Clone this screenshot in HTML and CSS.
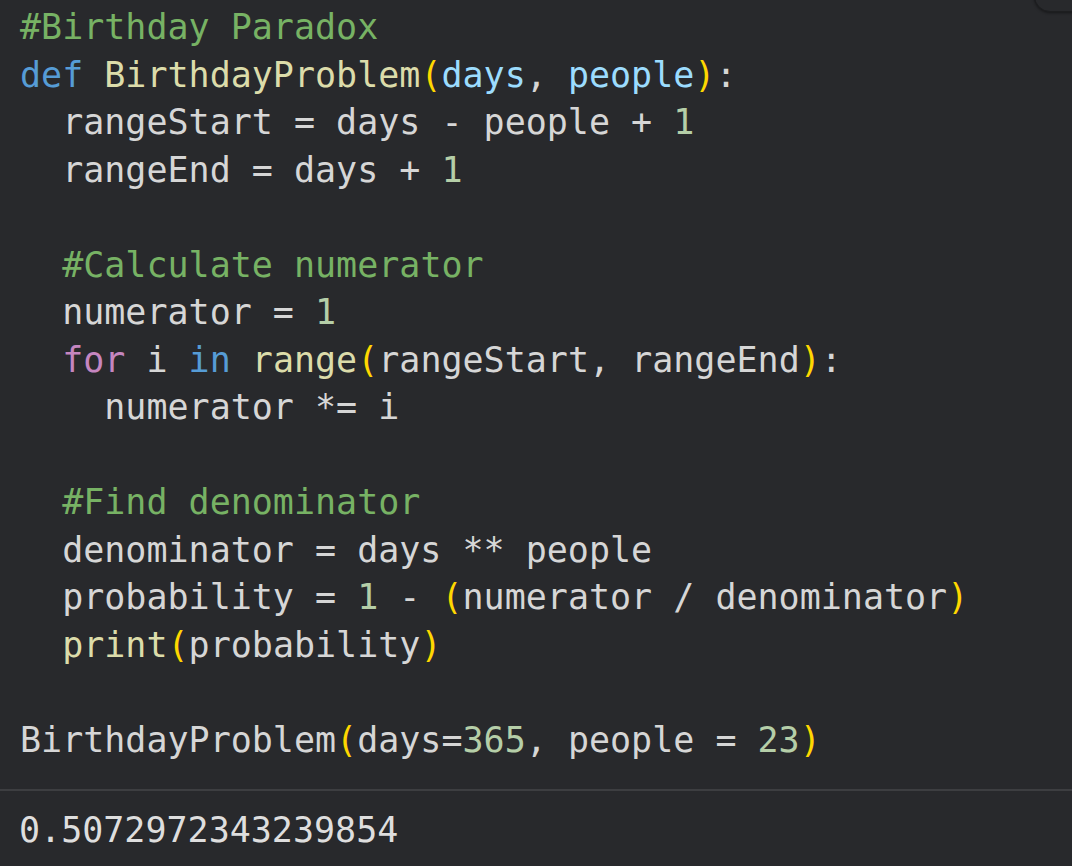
FILE: index.html
```html
<!DOCTYPE html>
<html>
<head>
<meta charset="utf-8">
<link rel="stylesheet" href="styles.css">
</head>
<body>
<div class="cell">
<div class="toolbar"></div>
<pre class="code"><span class="c">#Birthday Paradox</span>
<span class="k">def</span> <span class="f">BirthdayProblem</span><span class="p">(</span><span class="v">days</span>, <span class="v">people</span><span class="p">)</span>:
  rangeStart = days - people + <span class="n">1</span>
  rangeEnd = days + <span class="n">1</span>

  <span class="c">#Calculate numerator</span>
  numerator = <span class="n">1</span>
  <span class="ctl">for</span> i <span class="k">in</span> <span class="f">range</span><span class="p">(</span>rangeStart, rangeEnd<span class="p">)</span>:
    numerator *= i

  <span class="c">#Find denominator</span>
  denominator = days ** people
  probability = <span class="n">1</span> - <span class="p">(</span>numerator / denominator<span class="p">)</span>
  <span class="f">print</span><span class="p">(</span>probability<span class="p">)</span>

BirthdayProblem<span class="p">(</span>days=<span class="n">365</span>, people = <span class="n">23</span><span class="p">)</span></pre>
<div class="sep"></div>
<pre class="output">0.5072972343239854</pre>
</div>
</body>
</html>
```
FILE: styles.css
```css
html, body {
  margin: 0;
  padding: 0;
  background: #28292c;
  height: 100%;
  overflow: hidden;
}
.cell {
  position: relative;
  height: 866px;
}
.toolbar {
  position: absolute;
  left: 1034px;
  top: -40px;
  width: 80px;
  height: 50px;
  border-radius: 16px;
  background: #28292c;
  border: 1px solid #1d1e20;
  box-shadow: 0 1px 3px rgba(0, 0, 0, 0.45);
}
.code, .output {
  margin: 0;
  font-family: "DejaVu Sans Mono", monospace;
  font-size: 35px;
  line-height: 47.5px;
  color: #d6d6d6;
  white-space: pre;
}
.code {
  padding: 4px 0 0 20px;
  margin-bottom: 25px;
}
.sep {
  height: 2px;
  background: #3d3e41;
}
.output {
  padding: 16px 0 0 19px;
  color: #dedede;
}
.c { color: #77b264; }
.k { color: #569cd6; }
.f { color: #dcdcaa; }
.v { color: #9cdcfe; }
.p { color: #ffd700; }
.n { color: #b5cea8; }
.ctl { color: #c586c0; }
```
